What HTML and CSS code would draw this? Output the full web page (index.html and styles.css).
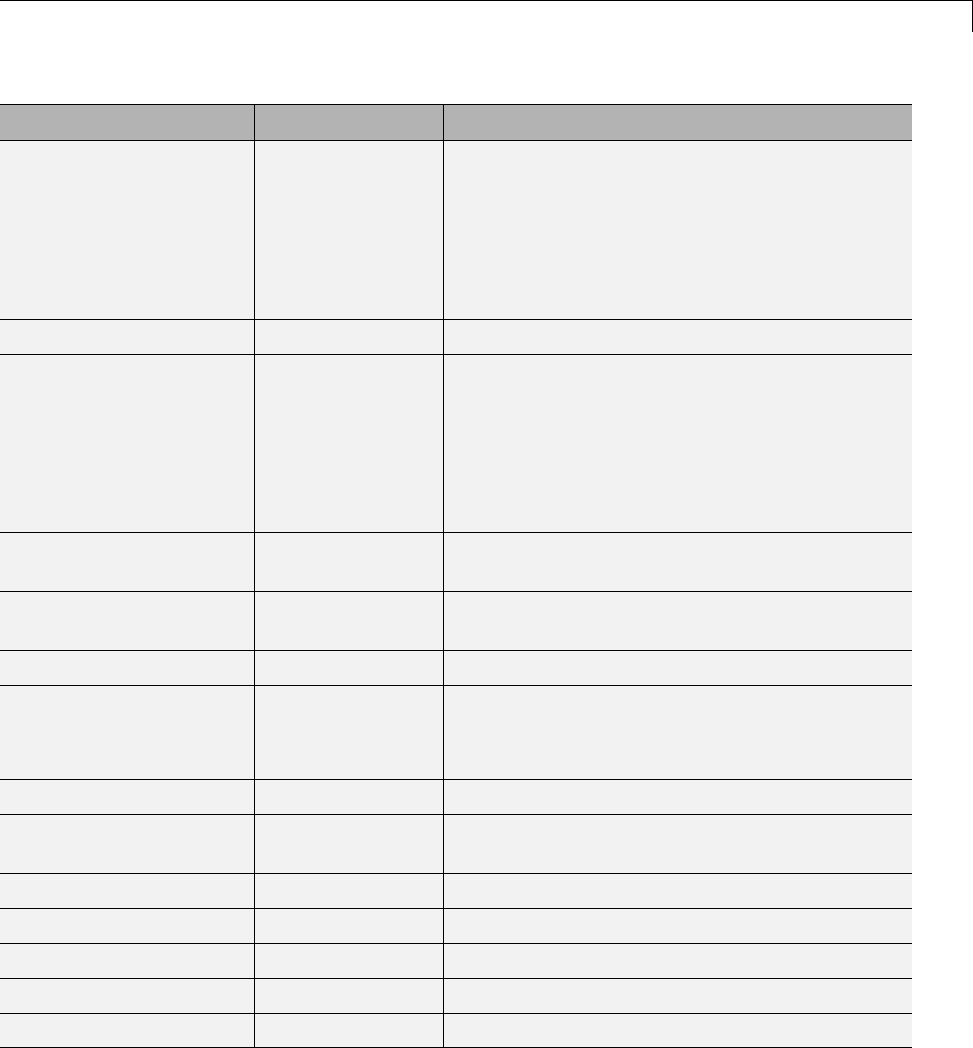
FILE: index.html
```html
<!DOCTYPE html>
<html>
<head>
<meta charset="utf-8">
<link rel="stylesheet" href="styles.css">
</head>
<body>
<div class="topbar"></div>
<div class="table">
  <div class="row head h36"><div class="cell"></div><div class="cell"></div><div class="cell"></div></div>
  <div class="row h179"><div class="cell"></div><div class="cell"></div><div class="cell"></div></div>
  <div class="row h35"><div class="cell"></div><div class="cell"></div><div class="cell"></div></div>
  <div class="row h178"><div class="cell"></div><div class="cell"></div><div class="cell"></div></div>
  <div class="row h59"><div class="cell"></div><div class="cell"></div><div class="cell"></div></div>
  <div class="row h59"><div class="cell"></div><div class="cell"></div><div class="cell"></div></div>
  <div class="row h35"><div class="cell"></div><div class="cell"></div><div class="cell"></div></div>
  <div class="row h94"><div class="cell"></div><div class="cell"></div><div class="cell"></div></div>
  <div class="row h35"><div class="cell"></div><div class="cell"></div><div class="cell"></div></div>
  <div class="row h59"><div class="cell"></div><div class="cell"></div><div class="cell"></div></div>
  <div class="row h35"><div class="cell"></div><div class="cell"></div><div class="cell"></div></div>
  <div class="row h35"><div class="cell"></div><div class="cell"></div><div class="cell"></div></div>
  <div class="row h35"><div class="cell"></div><div class="cell"></div><div class="cell"></div></div>
  <div class="row h35"><div class="cell"></div><div class="cell"></div><div class="cell"></div></div>
  <div class="row h34"><div class="cell"></div><div class="cell"></div><div class="cell"></div></div>
</div>
</body>
</html>
```
FILE: styles.css
```css
html, body {
  margin: 0;
  padding: 0;
  background: #ffffff;
  font-family: "Liberation Sans", Arial, sans-serif;
}
* { box-sizing: border-box; }
.topbar {
  width: 973px;
  height: 32px;
  border-top: 1px solid #000;
  border-right: 1px solid #000;
}
.table {
  width: 912px;
  margin-top: 72px;
  border-top: 1px solid #000;
}
.row {
  display: grid;
  grid-template-columns: 254px 189px 469px;
  border-bottom: 1px solid #000;
  background: #f2f2f2;
}
.row.head { background: #b3b3b3; }
.cell + .cell { border-left: 1px solid #000; }
.h34 { height: 34px; }
.h35 { height: 35px; }
.h36 { height: 36px; }
.h59 { height: 59px; }
.h94 { height: 94px; }
.h178 { height: 178px; }
.h179 { height: 179px; }
```
